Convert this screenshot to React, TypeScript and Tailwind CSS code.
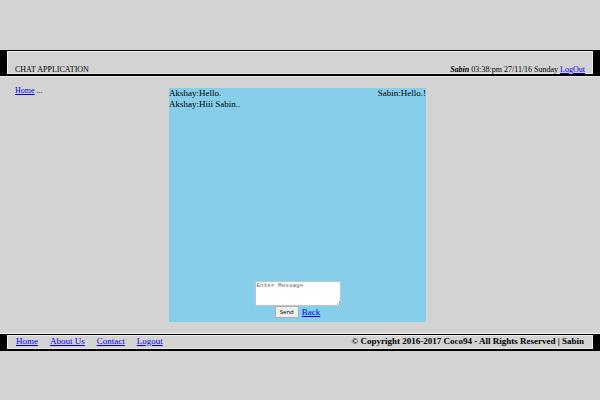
import React from "react";

const link = "text-[#0000ee] underline";

function Header() {
  return (
    <header className="flex h-[26px] items-end justify-between border-x-[7px] border-t border-b-2 border-black px-2 text-[8px] leading-[9px] shadow-[inset_1px_1px_0_#f0f0f0,inset_-1px_-1px_0_#e8e8e8,0_1px_0_#e8e8e8]">
      <h1>CHAT APPLICATION</h1>
      <p>
        <b className="italic">Sabin</b> 03:38:pm 27/11/16 Sunday{" "}
        <a href="#logout" className={link}>LogOut</a>
      </p>
    </header>
  );
}

function Chat() {
  return (
    <section className="flex h-[234px] flex-1 flex-col justify-between bg-[#87ceeb] pb-1 text-[9px] leading-[11px]">
      <div>
        <div className="flex justify-between">
          <p>Akshay:Hello.</p>
          <p>Sabin:Hello.!</p>
        </div>
        <p>Akshay:Hiii Sabin..</p>
      </div>
      <form className="flex flex-col items-center" onSubmit={(e) => e.preventDefault()}>
        <div className="relative">
          <textarea
            aria-label="Message"
            placeholder="Enter Message"
            className="block h-[25px] w-[86px] resize-none overflow-hidden border border-[#b5c9d1] bg-white px-px font-['Liberation_Mono',monospace] text-[6px] leading-[8px] placeholder:text-[#666666]"
          />
          <svg aria-hidden="true" viewBox="0 0 4 4" className="absolute right-px bottom-px size-1" fill="#aaaaaa">
            <path d="M3 0h1v4H3zM1 2h1v2H1z" />
          </svg>
        </div>
        <div className="flex items-center gap-[3px]">
          <button className="h-3 w-6 border border-[#b0b0b0] bg-[#eeeeee] text-center font-['Open_Sans',sans-serif] text-[6px] leading-[10px] font-medium">
            Send
          </button>
          <a href="#back" className={link}>Back</a>
        </div>
      </form>
    </section>
  );
}

function Footer() {
  return (
    <footer className="mt-3 flex h-[17px] items-start justify-between border-x-[7px] border-t border-b-2 border-black px-[9px] text-[9px] leading-[12px] shadow-[inset_1px_1px_0_#f0f0f0,inset_-1px_-1px_0_#e8e8e8,0_-1px_0_#f0f0f0]">
      <nav className="flex gap-3">
        <a href="#home" className={link}>Home</a>
        <a href="#about" className={link}>About Us</a>
        <a href="#contact" className={link}>Contact</a>
        <a href="#logout" className={link}>Logout</a>
      </nav>
      <p className="font-bold">© Copyright 2016-2017 Coco94 - All Rights Reserved | Sabin</p>
    </footer>
  );
}

export default function App() {
  return (
    <div className="min-h-screen bg-[#d3d3d3] pt-[50px] font-['Liberation_Serif',serif] text-black">
      <Header />
      <main className="flex pt-3">
        <aside className="w-[169px] pl-[15px] text-[8px] leading-[5px]">
          <a href="#home" className={link}>Home</a> ...
        </aside>
        <Chat />
        <div className="w-[174px]" />
      </main>
      <Footer />
    </div>
  );
}
